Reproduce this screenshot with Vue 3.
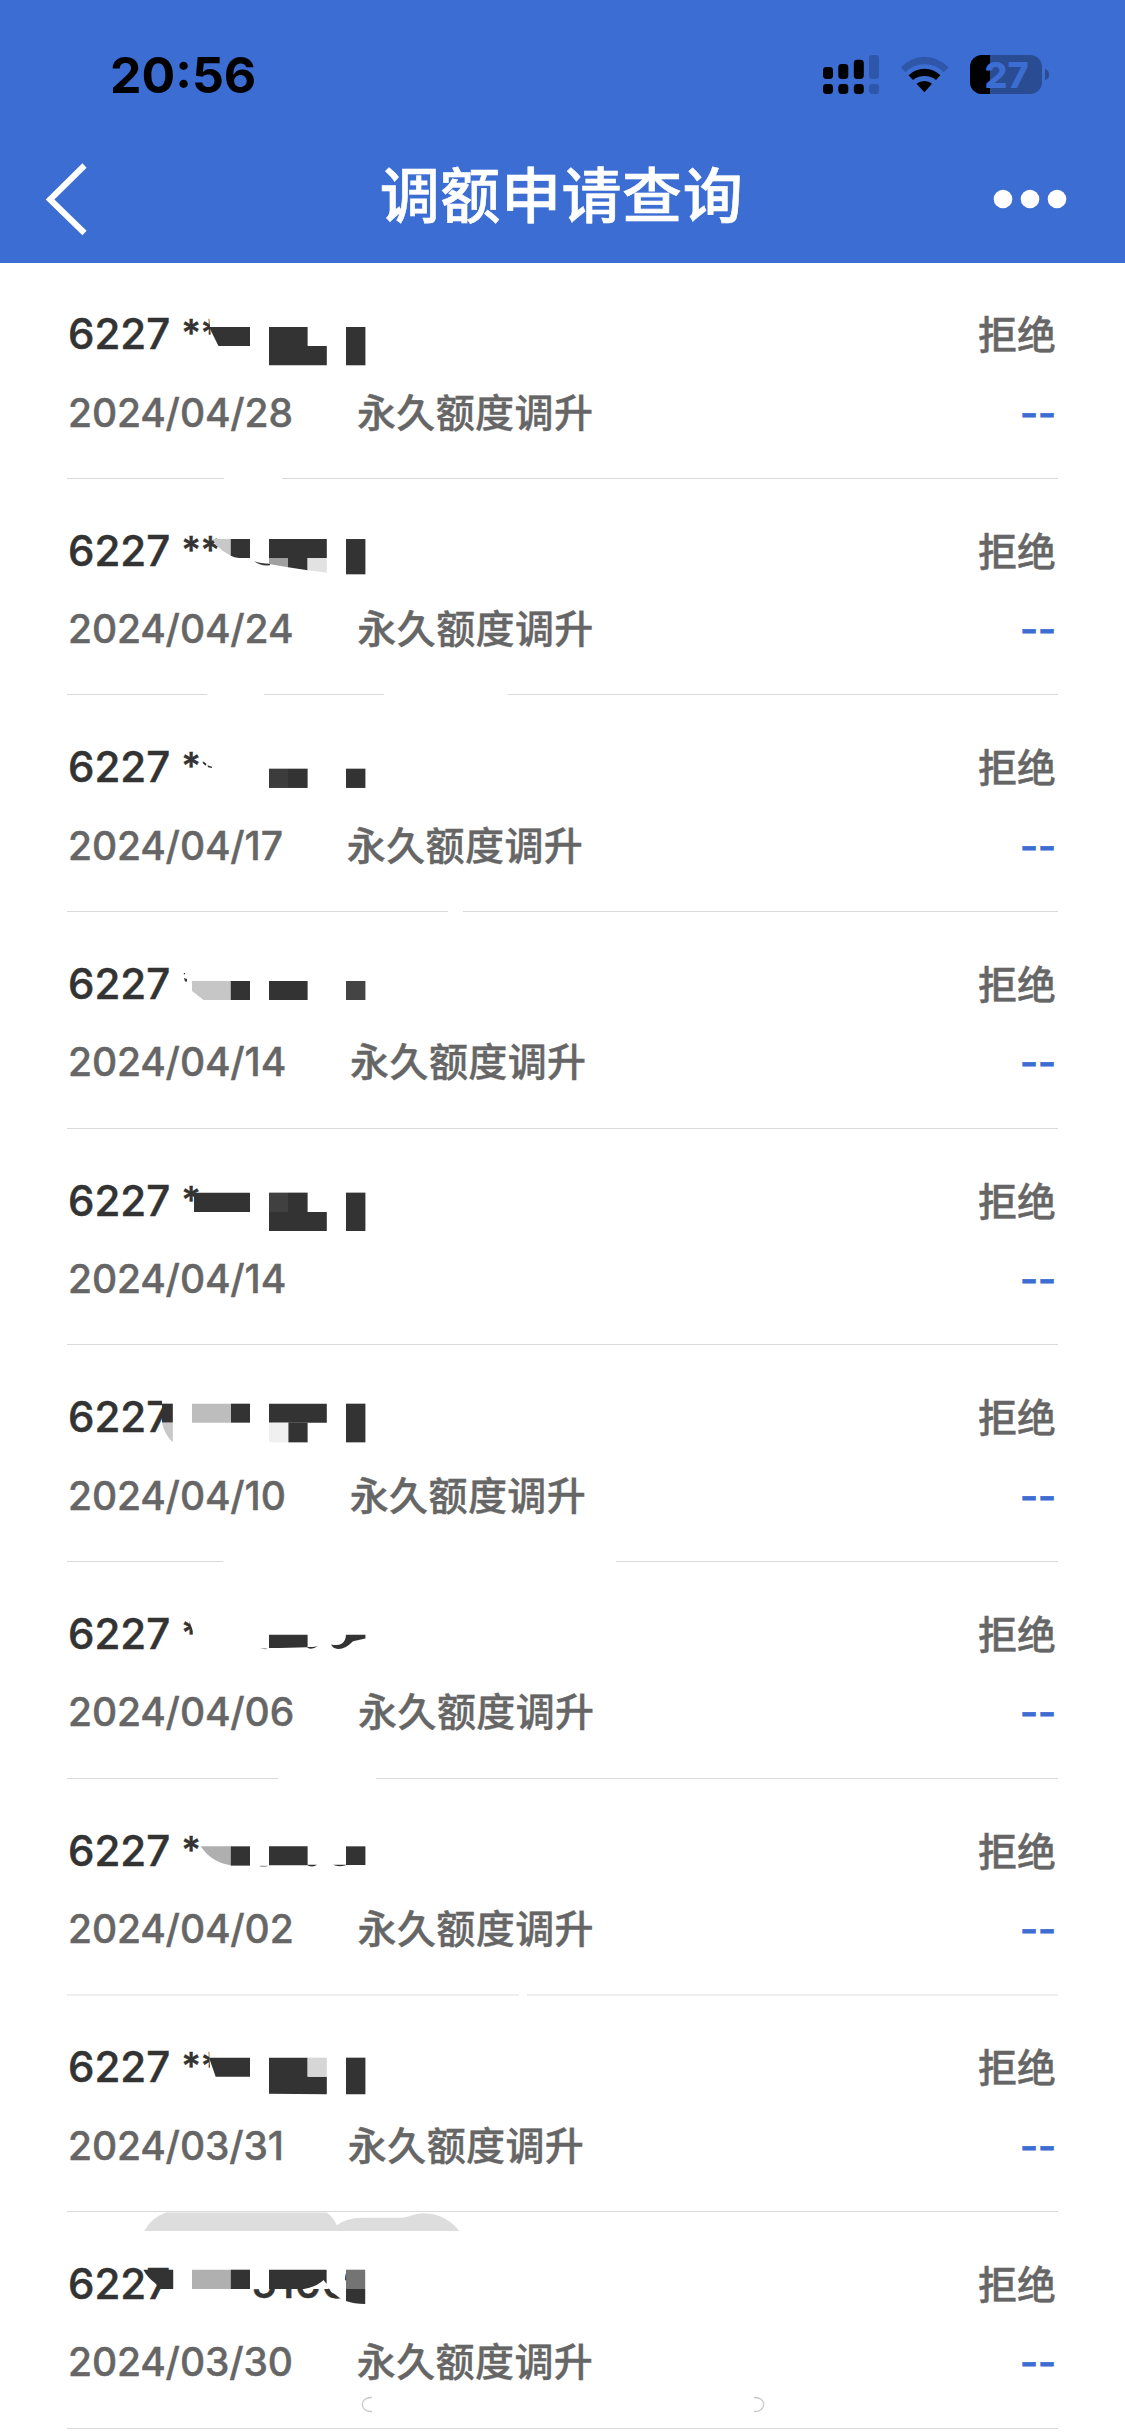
<script setup>
const ROW = 650 / 3
const TOP = 262
const D = '#333333'

const box = (x, y, w, h, fill = D) => ({ d: `M${x} ${y}h${w}v${h}h${-w}z`, fill })
const shape = (d, fill = D) => ({ d, fill })
const W = '#ffffff'

const records = [
  {
    stars: '**', date: '2024/04/28', type: '永久额度调升',
    gaps: [[224, 282]],
    mask: [
      shape('M209 316L220 316L228 327V346H218L211 338Z', W),
      shape('M209 327H250V346H218.5Z'),
      shape('M269 327H307.6V346H326.8V365.3H269Z'), box(346, 327, 19.4, 38.3),
    ],
  },
  {
    stars: '**', date: '2024/04/24', type: '永久额度调升',
    gaps: [[207, 264], [384, 508]],
    mask: [
      shape('M212.5 538.7H230.7V555.4Q222 551 216 545Z', '#c8c8c8'),
      shape('M230.7 538.7H250V557.7H239Q234 557 230.7 555.4Z'),
      shape('M254.3 561Q260 563.3 270 563.3V565Q260 566 254.3 561Z'),
      box(269, 538.7, 57.8, 19),
      shape('M269 557.7H288V567L269 563.7Z', '#a0a0a0'),
      shape('M288 557.7H307.6V570L288 567Z'),
      shape('M307.6 557.7H326.8V572.3L307.6 570Z', '#e2e2e2'),
      box(346, 538.7, 19.4, 35.3),
    ],
  },
  {
    stars: '*', date: '2024/04/17', type: '永久额度调升',
    gaps: [[448, 463]],
    mask: [
      shape('M202.8 761.5L206.5 764L205.5 766L202.8 763.5Z'),
      shape('M207.5 765.5L212 767V768.3L208 767.5Z'),
      box(269, 769, 19, 19.3, '#3c3c3c'), box(288, 769, 19.6, 19.3),
      box(346, 769, 19.4, 19.3),
    ],
  },
  {
    stars: '', date: '2024/04/14', type: '永久额度调升',
    gaps: [],
    mask: [
      box(183.8, 973, 1.3, 1.3), shape('M184 978L187 979V981.5L185 981.5Z'),
      shape('M192 981H230.7V1000H203.6L192 991Z', '#c6c6c6'),
      box(230.7, 981, 19.3, 19), box(269, 981, 38.6, 19), box(346, 981, 19.4, 19, '#444444'),
    ],
  },
  {
    stars: '*', date: '2024/04/14', type: '',
    gaps: [],
    mask: [
      box(194, 1192.3, 56, 19.4), box(269, 1192.3, 19, 19.4, '#404040'),
      box(288, 1192.3, 19.6, 19.4), box(269, 1211.7, 57.8, 19), box(346, 1192.3, 19.4, 38.4),
    ],
  },
  {
    stars: '', date: '2024/04/10', type: '永久额度调升',
    gaps: [[223, 616]],
    mask: [
      box(162, 1398, 14, 7, W),
      box(162, 1404, 10.8, 19),
      shape('M162 1423H172.8V1442.7Q164 1434 162 1423Z', '#c8c8c8'),
      box(192, 1404, 39, 19, '#bdbdbd'), box(231, 1404, 19, 19),
      box(269, 1404, 57.8, 19), box(269, 1423, 19.4, 19.7, '#f0f0f0'),
      box(288.4, 1423, 19.2, 19.7), box(346, 1404, 19.4, 38.7),
    ],
  },
  {
    stars: '*', date: '2024/04/06', type: '永久额度调升',
    gaps: [[278, 376]],
    mask: [
      shape('M188 1618H201V1638H193.5L193 1631Z', W),
      shape('M260 1648.8Q264 1647.6 267.5 1648.6L266 1649.3Z', '#888888'),
      shape('M269 1634.7H307.6V1647H312Q315 1647 318 1645.8Q314 1649.4 309 1648.6L307 1647.3Q290 1648 269 1648Z'),
      shape('M346 1634.7H365.4V1638.5L353 1641.3Q345 1649.5 338 1649Q333 1648.5 331 1644.5Q338 1646 342 1643.5Q346 1640 346 1634.7Z'),
    ],
  },
  {
    stars: '*', date: '2024/04/02', type: '永久额度调升', light: true,
    gaps: [[519, 527]],
    mask: [
      shape('M200.7 1846H230.7V1865Q211 1862 200.7 1846Z', '#afafaf'),
      box(230.7, 1846, 19.3, 19.3),
      shape('M259 1865.3H268L266 1866.3H261Z', '#888888'),
      box(269, 1846, 38.6, 19),
      shape('M307.6 1864.5H317Q314 1867 308 1865.5Z'),
      shape('M333 1864.5H346V1865Q338 1867 333 1864.5Z'),
      box(346, 1846, 19.4, 18.7),
    ],
  },
  {
    stars: '**', date: '2024/03/31', type: '永久额度调升',
    gaps: [],
    mask: [
      shape('M209 2047H222L228 2058V2077H216L210 2069Z', W),
      shape('M209 2058H250V2077H215.7Z'),
      shape('M269 2058H307.6V2077H326.8V2094.6L269 2094Z'),
      box(307.6, 2058, 19.2, 19, '#d6d6d6'), box(346, 2058, 19.4, 36.6),
    ],
  },
  {
    stars: '', date: '2024/03/30', type: '永久额度调升',
    gaps: [], digits: '5100',
    mask: [
      box(250, 2262, 95, 27, W),
      shape('M323 2282Q331 2292 341 2299V2301H350V2280Z', W),
      shape('M143.4 2269.7H173.2V2289H160L155 2283Q147 2277 143.4 2269.7Z'),
      box(192, 2269.7, 38.7, 19.3, '#b0b0b0'), box(230.7, 2269.7, 19.3, 19.3),
      shape('M269 2269.7H326.6V2284L323.5 2280Q318 2286 304 2289H269Z'),
      shape('M328.5 2288Q332 2296 341 2298.3Q334 2300 330 2295.5Q328 2292 328.5 2288Z'),
      box(346, 2269.7, 19.2, 19.3, '#747474'),
      shape('M346 2289H365.2V2304Q354 2304 346 2301Z'),
      shape('M144.3 2231Q151 2218 166 2212.5H326.8Q333 2217 336.8 2225.3Q346.4 2217.7 362 2217.7H401C409 2217.7 413 2213.3 424 2213.3Q446 2214 459.3 2231Z', '#dddddd'),
    ],
  },
]
</script>

<template>
  <div class="screen">
    <header class="header">
      <div class="status">
        <span class="clock">20:56</span>
        <svg class="status-icons" width="228" height="44" viewBox="822 53 228 44">
          <g fill="#000">
            <rect x="823" y="67" width="10" height="12" rx="3.4" />
            <rect x="838.3" y="64" width="10" height="15" rx="3.4" />
            <rect x="853.8" y="59.7" width="10" height="19.3" rx="3.4" />
            <rect x="823" y="84" width="10" height="10" rx="3.4" />
            <rect x="838.3" y="84" width="10" height="10" rx="3.4" />
            <rect x="853.8" y="84" width="10" height="10" rx="3.4" />
          </g>
          <g fill="#2f57a9">
            <rect x="869" y="55" width="10" height="24" rx="3.4" />
            <rect x="869" y="84" width="10" height="10" rx="3.4" />
          </g>
          <path d="M900.8 67.6Q911 56.7 924.5 56.7T948.6 67.6L943.8 72.3Q936 64.3 924.5 64.3T905.4 72.3Z" fill="#2f57a9" />
          <path d="M908.5 75.3Q915 68.7 924.5 68.7T940.4 75.3L936 80Q931.3 75.9 924.5 75.9T913 80Z" fill="#000" />
          <path d="M916.5 83.7Q920 81 924.5 81T932 83.7L924.4 92.3Z" fill="#000" />
          <rect x="970" y="55" width="72" height="39" rx="12" fill="#2a4c92" />
          <path d="M990 55H982A12 12 0 0 0 970 67V82A12 12 0 0 0 982 94H990Z" fill="#000" />
          <path d="M1045 69Q1049 70 1049 74.5T1045 80Z" fill="#2a4c92" />
          <text x="1006.5" y="87.5" class="battery-text">27</text>
        </svg>
      </div>
      <nav class="nav">
        <svg class="back" width="46" height="76" viewBox="43 161 46 76">
          <path d="M84.5 165.5L50 199.5L84.5 233" fill="none" stroke="#fff" stroke-width="6" />
        </svg>
        <h1 class="title">调额申请查询</h1>
        <svg class="more" width="76" height="20" viewBox="0 0 76 20">
          <circle cx="11" cy="10" r="9.3" /><circle cx="38" cy="10" r="9.3" /><circle cx="65" cy="10" r="9.3" />
        </svg>
      </nav>
    </header>

    <main class="list">
      <section v-for="(r, i) in records" :key="i" class="row">
        <div class="line main-line">
          <span class="card">6227 <span class="stars">{{ r.stars }}</span></span>
          <span class="result">拒绝</span>
        </div>
        <div class="line sub-line">
          <span class="date">{{ r.date }}</span>
          <span class="type">{{ r.type }}</span>
          <span class="amount">--</span>
        </div>
        <svg class="overlay" width="1125" height="216.667" :viewBox="`0 ${TOP + i * ROW} 1125 ${ROW}`">
          <text v-if="r.digits" x="251" y="2298.3" class="digits">{{ r.digits }}</text>
          <path v-for="(m, k) in r.mask" :key="k" :d="m.d" :fill="m.fill" />
          <g v-if="i === 9" fill="none" stroke="#c9c9c9" stroke-width="1.3">
            <path d="M372 2397.5C359 2397 359 2412 372 2411.5" />
            <path d="M754 2397.5C767 2397 767 2412 754 2411.5" />
          </g>
        </svg>
        <svg class="rule" width="1125" height="2" viewBox="0 0 1125 2" shape-rendering="crispEdges">
          <rect x="67" y="0" width="991" :height="r.light ? 2 : 1" :fill="r.light ? '#eeeeee' : '#d9d9d9'" />
          <rect v-for="(g, k) in r.gaps" :key="k" :x="g[0]" y="0" :width="g[1] - g[0]" height="2" fill="#fff" />
        </svg>
      </section>
    </main>
  </div>
</template>

<style>
body { margin: 0; background: #fff; }
</style>

<style scoped>
.screen {
  width: 1125px;
  height: 2435px;
  overflow: hidden;
  background: #fff;
  font-family: Inter, "Noto Sans CJK SC", sans-serif;
  font-weight: 500;
}
.header {
  height: 262.5px;
  background: #3c6dd2;
}
.status {
  height: 132px;
  display: flex;
  align-items: flex-start;
  justify-content: space-between;
  padding: 0 75px 0 110px;
  box-sizing: border-box;
}
.clock {
  margin-top: 44.5px;
  font-size: 50px;
  line-height: 60px;
  font-weight: 700;
  color: #000;
}
.status-icons { margin-top: 53px; }
.battery-text {
  font-size: 36px;
  font-weight: 800;
  fill: #3c6dd2;
  text-anchor: middle;
}
.nav {
  height: 130px;
  display: flex;
  align-items: center;
  justify-content: space-between;
  padding: 3px 57px 0 43px;
  box-sizing: border-box;
}
.back { flex: none; }
.title {
  margin: 0 0 6px 42px;
  font-size: 60px;
  line-height: 80px;
  font-weight: 500;
  letter-spacing: 0.6px;
  color: #fff;
  -webkit-text-stroke: 0.6px #fff;
}
.more { fill: #fff; }
.list { margin-top: -0.5px; }
.row {
  position: relative;
  height: 216.6667px;
  padding: 42px 69px 0 68px;
  box-sizing: border-box;
}
.line {
  display: flex;
  align-items: center;
}
.main-line { height: 60px; }
.sub-line { height: 60px; margin-top: 18.5px; }
.card {
  flex: 1;
  font-size: 42px;
  line-height: 60px;
  color: #333;
  white-space: pre;
  -webkit-text-stroke: 0.5px #333;
}
.stars {
  font-size: 37px;
  line-height: 1;
  vertical-align: 3px;
}
.result,
.type {
  font-size: 39px;
  line-height: 60px;
  color: #666;
  -webkit-text-stroke: 0.4px #666;
}
.result { position: relative; top: 1px; }
.date {
  font-size: 39px;
  line-height: 60px;
  letter-spacing: -0.15px;
  color: #666;
  -webkit-text-stroke: 0.4px #666;
}
.type { flex: 1; margin-left: 64px; letter-spacing: 0.4px; }
.amount {
  font-size: 39px;
  line-height: 60px;
  color: #3c6dd2;
  -webkit-text-stroke: 0.8px #3c6dd2;
}
.overlay { position: absolute; left: 0; top: 0; overflow: visible; }
.digits { font-size: 42px; fill: #333; stroke: #333; stroke-width: 0.5px; }
.rule { position: absolute; left: 0; bottom: -1px; }
</style>
